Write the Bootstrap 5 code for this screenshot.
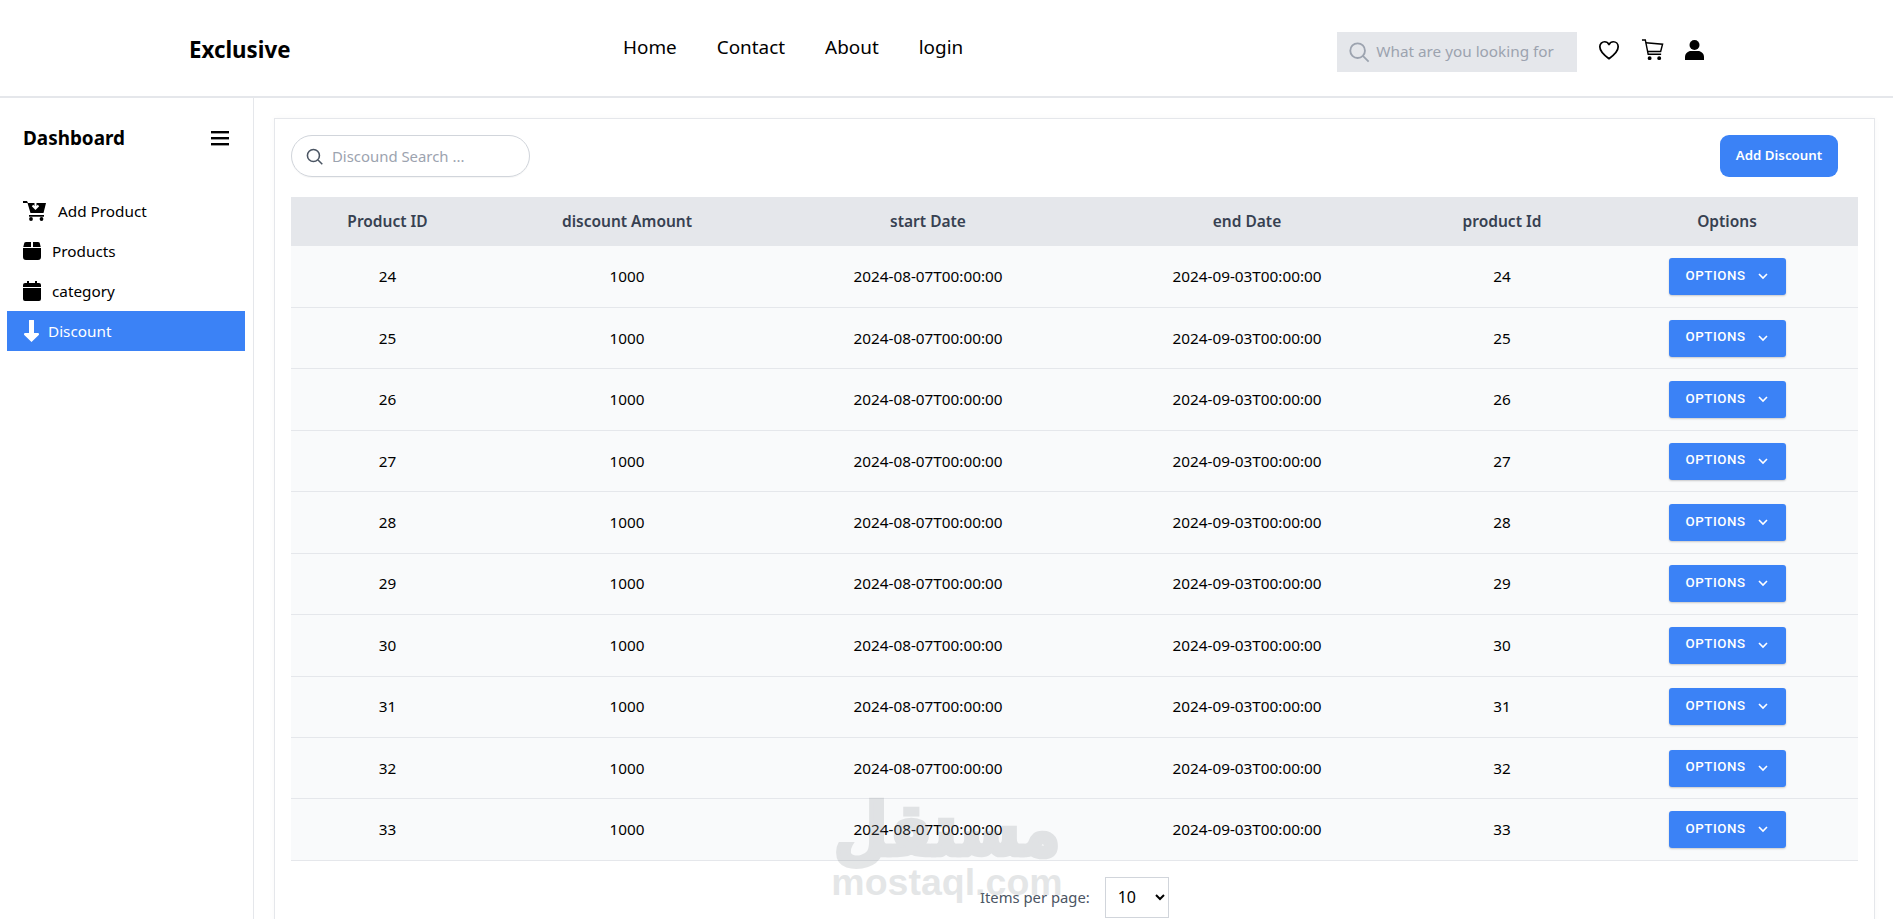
<!doctype html>
<html lang="en">
<head>
<meta charset="utf-8">
<title>Discount</title>
<link href="https://cdn.jsdelivr.net/npm/bootstrap@5.3.0/dist/css/bootstrap.min.css" rel="stylesheet">
<style>
html,body{height:100%;overflow:hidden}
body{font-family:"Noto Sans","Open Sans","Liberation Sans",sans-serif;color:#000;background:#fff;font-size:15px}
.top-bar{height:98px;border-bottom:2px solid #e5e7eb;padding-left:189px;padding-right:0}
.brand-name{font-size:22.3px;font-weight:700;color:#000;width:434px;text-decoration:none;margin-top:3px}
.top-links{gap:40px;font-size:18.9px;margin-top:-2px}
.top-links a{color:#000;text-decoration:none}
.top-search{margin-left:374px;width:240px;height:40px;background:#e5e7eb;padding-left:11px;gap:6px;margin-top:7px}
.top-search span{color:#9ca3af;font-size:15.3px;white-space:nowrap}
.top-icons{margin-left:21px;gap:21px;margin-top:3px}
.shell{height:821px}
.side-col{width:254px;border-right:1px solid #e5e7eb;flex:none}
.side-head{height:93px;padding:0 24px 13px 23px}
.side-title{font-size:18.9px;font-weight:700}
.side-menu{padding:0 8px 0 7px;margin:0;list-style:none}
.side-item{height:40px;padding-left:16px;color:#000;display:flex;align-items:center;text-decoration:none;font-size:15.3px}
.side-item.is-on{background:#3b82f6;color:#fff}
.item-gap-a{margin-right:12px}
.item-gap-b{margin-right:11px}
.item-gap-c{margin-right:11px}
.main-col{flex:1;padding:20px 18px 0 20px;min-width:0}
.panel-box{border:1px solid #e5e7eb;padding:16px 16px 0 16px;height:900px;box-shadow:0 0 6px rgba(0,0,0,.03);position:relative}
.find-box{width:239px;height:42px;border:1px solid #d1d5db;border-radius:21px;padding-left:14px;gap:9px;box-shadow:0 1px 1px rgba(0,0,0,.04)}
.find-box span{color:#9ca3af;font-size:14.9px}
.add-btn{width:118px;height:42px;background:#3b82f6;color:#fff;border:0;border-radius:9px;font-size:13.3px;font-weight:600;margin-right:20px;padding:0}
.data-grid{width:1567px;table-layout:fixed;margin:20px 0 0;border-collapse:collapse}
.data-grid th{height:49px;background:#e5e7eb;color:#374151;font-weight:600;font-size:15.5px;text-align:center;vertical-align:middle;padding:0}
.data-grid td{height:61.45px;background:#f9fafb;border-bottom:1px solid #e5e7eb;text-align:center;vertical-align:middle;padding:0;font-size:15.3px;color:#000}
.c1{width:193px}.c2{width:286px}.c3{width:316px}.c4{width:322px}.c5{width:188px}.c6{width:262px}
.opt-btn{width:117px;height:37px;background:#3b82f6;color:#fff;border:0;border-radius:3px;font-family:Roboto,sans-serif;font-weight:500;font-size:13.3px;letter-spacing:.55px;padding:0 0 2px;box-shadow:0 1px 2px rgba(0,0,0,.2)}
.opt-btn svg{margin-left:11px}
.pager-row{margin-top:16px;margin-left:689px;gap:15px;color:#4b5563;font-size:14.8px}
.pager-row select{width:64px;height:41px;border:1px solid #d1d5db;background:#fff;color:#000;font-size:16px;padding:0 8px;border-radius:0}
.mark-wm{position:absolute;left:556px;top:676px;width:232px;color:#8a8f95;opacity:.22;text-align:center;font-family:"DejaVu Sans",sans-serif;font-weight:700;line-height:1;pointer-events:none}
.mark-wm b{display:block;font-size:62px;height:64px;-webkit-text-stroke:4px #8a8f95;transform:scaleY(1.16);transform-origin:top}
.mark-wm i{display:block;font-style:normal;font-size:37.5px;font-family:"Liberation Sans",sans-serif;margin-top:5px}
</style>
</head>
<body>
<header class="top-bar d-flex align-items-center">
  <a class="brand-name" href="#">Exclusive</a>
  <nav class="top-links d-flex">
    <a href="#">Home</a><a href="#">Contact</a><a href="#">About</a><a href="#">login</a>
  </nav>
  <div class="top-search d-flex align-items-center">
    <svg width="22" height="22" viewBox="0 0 24 24" fill="none" stroke="#9ca3af" stroke-width="2"><circle cx="10.5" cy="10.5" r="8"/><path d="m16.5 16.5 6 6"/></svg>
    <span>What are you looking for</span>
  </div>
  <div class="top-icons d-flex align-items-center">
    <svg width="22" height="22" viewBox="0 0 24 24" fill="none" stroke="#000" stroke-width="1.900" stroke-linejoin="round"><path d="M12 21.500C5 16.500 2 12.500 2 8.500 2 5 4.500 3 7.200 3c2 0 3.700 1 4.800 3 1.100-2 2.800-3 4.800-3C19.500 3 22 5 22 8.500c0 4-3 8-10 13z"/></svg>
    <svg width="23" height="23" viewBox="0 0 24 24" fill="none" stroke="#000" stroke-width="1.500"><path d="M1 2h3.500L7.500 17h13.500"/><path d="M5 5l17.500 1.500L20.500 14H7"/><circle cx="9" cy="21" r="1.300" fill="#000"/><circle cx="19" cy="21" r="1.300" fill="#000"/></svg>
    <svg width="19" height="22" viewBox="0 0 19 22" fill="#000"><circle cx="9.500" cy="6" r="5"/><path d="M0 21v-3c0-3.500 3-6 6-6h7c3 0 6 2.500 6 6v3z"/></svg>
  </div>
</header>
<div class="shell d-flex">
  <aside class="side-col">
    <div class="side-head d-flex align-items-center justify-content-between">
      <span class="side-title">Dashboard</span>
      <svg width="18" height="16" viewBox="0 0 18 16" fill="#000"><rect width="18" height="2.400" y="1"/><rect width="18" height="2.400" y="7"/><rect width="18" height="2.400" y="13"/></svg>
    </div>
    <ul class="side-menu">
      <li><a class="side-item" href="#"><svg class="item-gap-a" width="23" height="20" viewBox="0 0 23 20"><path d="M0 0h4l1 2h18l-2.500 10H7.500L4.500 2H0z"/><path d="M12.500 2v4.500M9.500 4.500l3 3 3-3" fill="none" stroke="#fff" stroke-width="2"/><rect x="6" y="14" width="15" height="1.700"/><circle cx="8" cy="18" r="1.900"/><circle cx="18.500" cy="18" r="1.900"/></svg><span>Add Product</span></a></li>
      <li><a class="side-item" href="#"><svg class="item-gap-b" width="18" height="18" viewBox="0 0 18 18"><path d="M3 0h5v5H.3L1 2a2 2 0 0 1 2-2zM10 0h5a2 2 0 0 1 2 2l.7 3H10zM0 6h18v9a3 3 0 0 1-3 3H3a3 3 0 0 1-3-3z"/></svg><span>Products</span></a></li>
      <li><a class="side-item" href="#"><svg class="item-gap-c" width="18" height="20" viewBox="0 0 18 20"><path d="M4 0h2v2h6V0h2v2h2a2 2 0 0 1 2 2v2H0V4a2 2 0 0 1 2-2h2zM0 7h18v11a2 2 0 0 1-2 2H2a2 2 0 0 1-2-2z"/></svg><span>category</span></a></li>
      <li><a class="side-item is-on" href="#"><svg class="me-2" width="17" height="22" viewBox="0 0 17 22" fill="#fff"><path d="M6 1a2.500 2.500 0 0 1 5 0v12h3.500c1.500 0 2 1.200 1 2.300L8.500 22l-7-6.700C.5 14.200 1 13 2.500 13H6z"/></svg><span>Discount</span></a></li>
    </ul>
  </aside>
  <main class="main-col">
    <section class="panel-box">
      <div class="d-flex justify-content-between align-items-center">
        <div class="find-box d-flex align-items-center">
          <svg width="17" height="17" viewBox="0 0 24 24" fill="none" stroke="#4b5563" stroke-width="2.200"><circle cx="10.500" cy="10.500" r="8.500"/><path d="m17 17 6 6"/></svg>
          <span>Discound Search ...</span>
        </div>
        <button class="add-btn" type="button">Add Discount</button>
      </div>
      <table class="data-grid">
        <colgroup><col class="c1"><col class="c2"><col class="c3"><col class="c4"><col class="c5"><col class="c6"></colgroup>
        <thead><tr><th>Product ID</th><th>discount Amount</th><th>start Date</th><th>end Date</th><th>product Id</th><th>Options</th></tr></thead>
        <tbody id="rows"></tbody>
      </table>
      <div class="pager-row d-flex align-items-center">
        <span>Items per page:</span>
        <select><option>10</option><option>20</option></select>
      </div>
      <div class="mark-wm"><b>مستقل</b><i>mostaql.com</i></div>
    </section>
  </main>
</div>
<script>
var h='';
for(var i=24;i<=33;i++){
h+='<tr><td>'+i+'</td><td>1000</td><td>2024-08-07T00:00:00</td><td>2024-09-03T00:00:00</td><td>'+i+'</td><td><button class="opt-btn" type="button">OPTIONS<svg width="12" height="12" viewBox="0 0 12 12" fill="none" stroke="#fff" stroke-width="1.600"><path d="m2 4 4 4 4-4"/></svg></button></td></tr>';
}
document.getElementById('rows').innerHTML=h;
</script>
<script src="https://cdn.jsdelivr.net/npm/bootstrap@5.3.0/dist/js/bootstrap.bundle.min.js"></script>
</body>
</html>
